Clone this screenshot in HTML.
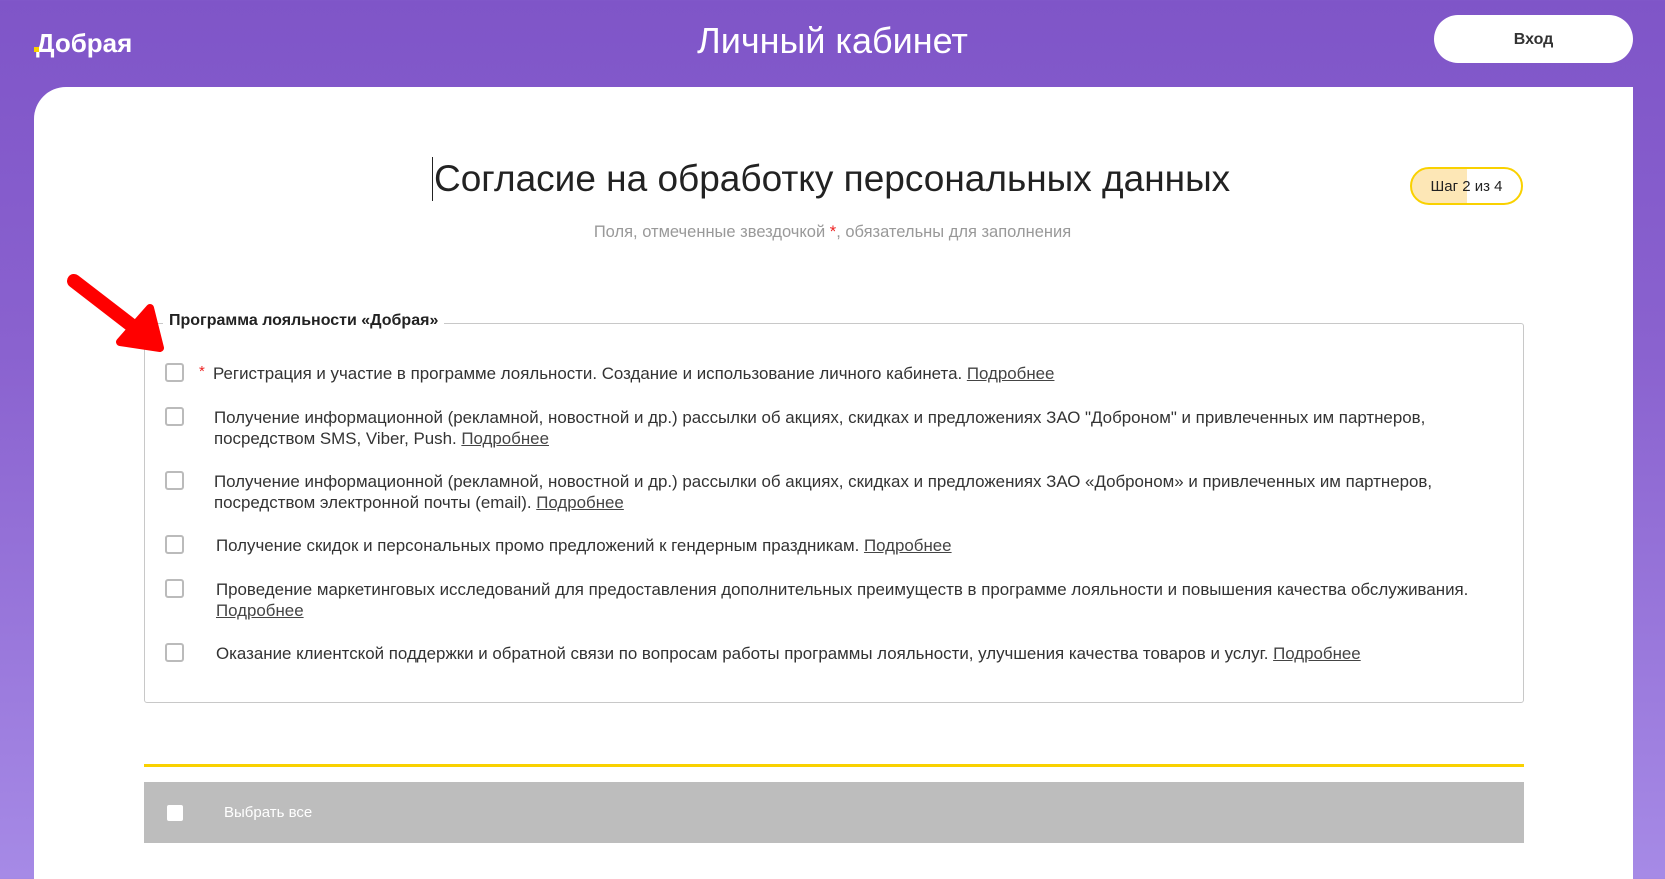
<!DOCTYPE html>
<html><head><meta charset="utf-8"><style>
*{margin:0;padding:0;box-sizing:border-box}
html,body{width:1665px;height:879px;overflow:hidden}
body{font-family:"Liberation Sans",sans-serif;background:linear-gradient(#7f55c8 0%,#8a62cf 40%,#a68ae6 100%);position:relative;color:#222}
.abs{position:absolute}
.logo{left:36px;top:28px;color:#fff;font-size:26px;font-weight:bold}
.title{left:0;width:1665px;text-align:center;top:20px;color:#fff;font-size:36px}
.btn{left:1434px;top:15px;width:199px;height:48px;background:#fff;border-radius:24px;text-align:center;line-height:50px;font-weight:bold;font-size:16px;color:#333}
.panel{left:34px;top:87px;width:1599px;height:800px;background:#fff;border-top-left-radius:32px}
.h1{left:432px;top:157px;font-size:37px;color:#222;white-space:nowrap;border-left:1px solid #222;padding-left:1px;line-height:44px}
.sub{left:0;width:1665px;text-align:center;top:223px;font-size:16.5px;color:#999}
.step{left:1410px;top:167px;width:113px;height:38px;border:2px solid #f9d100;border-radius:19px;overflow:hidden;background:linear-gradient(90deg,#fde7b6 0,#fde7b6 55px,#fff 55px)}
.step span{position:absolute;left:0;right:0;top:9px;text-align:center;font-size:15px;color:#222}
.fs{left:144px;top:323px;width:1380px;height:380px;border:1px solid #c8c8c8;border-radius:3px}
.lg{left:163px;top:312px;background:#fff;padding:0 6px;font-weight:bold;font-size:16px;color:#222}
.cb{width:19px;height:19px;border:2px solid #bbb;border-radius:3px;left:165px}
.t{font-size:16.9px;color:#333;line-height:21px;white-space:nowrap}
.t u{color:#444}
.star{color:#e22;font-size:15px}
.yl{left:144px;top:764px;width:1380px;height:3px;background:#f9d100}
.gb{left:144px;top:782px;width:1380px;height:61px;background:#bdbdbd}
</style></head><body>
<div class="abs logo">Добрая</div>
<div class="abs" style="left:34px;top:47px;width:5px;height:5px;background:#f9d100"></div>
<div class="abs title">Личный кабинет</div>
<div class="abs btn">Вход</div>
<div class="abs panel"></div>
<div class="abs h1">Согласие на обработку персональных данных</div>
<div class="abs sub">Поля, отмеченные звездочкой <span style="color:#e22">*</span>, обязательны для заполнения</div>
<div class="abs step"><span>Шаг 2 из 4</span></div>
<div class="abs fs"></div>
<div class="abs lg">Программа лояльности «Добрая»</div>

<div class="abs cb" style="top:363px"></div>
<div class="abs star" style="left:199px;top:363px">*</div>
<div class="abs t" style="left:213px;top:363px">Регистрация и участие в программе лояльности. Создание и использование личного кабинета. <u>Подробнее</u></div>

<div class="abs cb" style="top:407px"></div>
<div class="abs t" style="left:214px;top:407px">Получение информационной (рекламной, новостной и др.) рассылки об акциях, скидках и предложениях ЗАО "Доброном" и привлеченных им партнеров,<br>посредством SMS, Viber, Push. <u>Подробнее</u></div>

<div class="abs cb" style="top:471px"></div>
<div class="abs t" style="left:214px;top:471px">Получение информационной (рекламной, новостной и др.) рассылки об акциях, скидках и предложениях ЗАО «Доброном» и привлеченных им партнеров,<br>посредством электронной почты (email). <u>Подробнее</u></div>

<div class="abs cb" style="top:535px"></div>
<div class="abs t" style="left:216px;top:535px">Получение скидок и персональных промо предложений к гендерным праздникам. <u>Подробнее</u></div>

<div class="abs cb" style="top:579px"></div>
<div class="abs t" style="left:216px;top:579px">Проведение маркетинговых исследований для предоставления дополнительных преимуществ в программе лояльности и повышения качества обслуживания.<br><u>Подробнее</u></div>

<div class="abs cb" style="top:643px"></div>
<div class="abs t" style="left:216px;top:643px">Оказание клиентской поддержки и обратной связи по вопросам работы программы лояльности, улучшения качества товаров и услуг. <u>Подробнее</u></div>

<div class="abs yl"></div>
<div class="abs gb"></div>
<div class="abs" style="left:167px;top:805px;width:16px;height:16px;background:#fff;border-radius:2px"></div>
<div class="abs" style="left:224px;top:804px;color:#fff;font-size:15px">Выбрать все</div>

<svg class="abs" style="left:0;top:0" width="1665" height="879">
<line x1="74" y1="281" x2="135" y2="328" stroke="#f00" stroke-width="14" stroke-linecap="round"/>
<polygon points="160,348 120,342 150,308" fill="#f00" stroke="#f00" stroke-width="8" stroke-linejoin="round"/>
</svg>
</body></html>
